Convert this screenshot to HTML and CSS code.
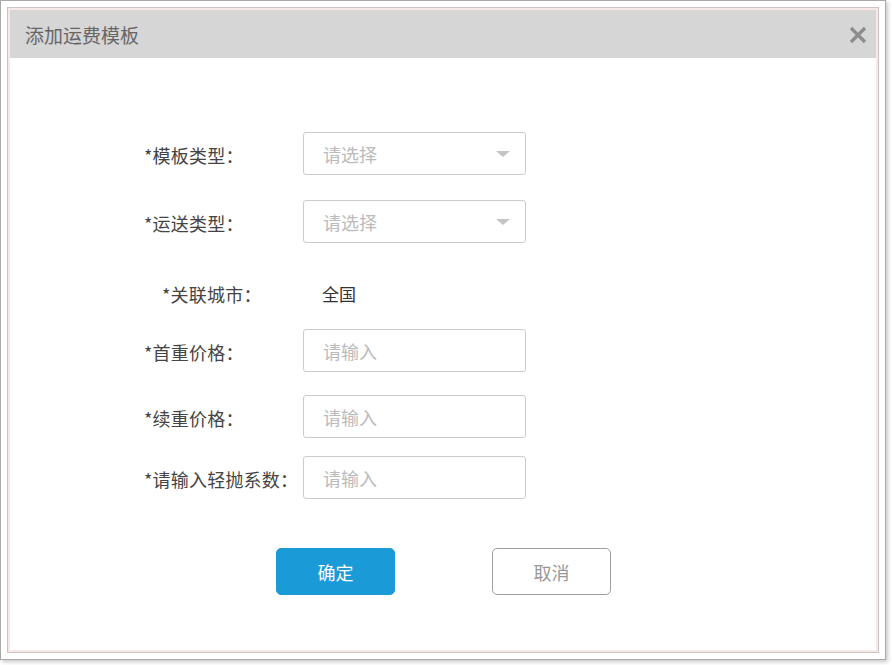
FILE: index.html
```html
<!DOCTYPE html>
<html lang="zh">
<head>
<meta charset="utf-8">
<title>添加运费模板</title>
<link rel="stylesheet" href="styles.css">
</head>
<body>
<div class="frame">
  <div class="frame-inner">
    <div class="panel">
      <div class="header">
        <span class="title">添加运费模板</span>
        <span class="close">
          <svg width="18" height="18" viewBox="0 0 18 18"><path d="M2 2 L16 16 M16 2 L2 16" stroke="#8c8c8c" stroke-width="3.2" stroke-linecap="butt"/></svg>
        </span>
      </div>
      <div class="form">
        <div class="row r1">
          <label class="label">*模板类型：</label>
          <div class="field select"><span class="ph">请选择</span><span class="arrow"></span></div>
        </div>
        <div class="row r2">
          <label class="label">*运送类型：</label>
          <div class="field select"><span class="ph">请选择</span><span class="arrow"></span></div>
        </div>
        <div class="row r3">
          <label class="label label-indent">*关联城市：</label>
          <div class="value">全国</div>
        </div>
        <div class="row r4">
          <label class="label">*首重价格：</label>
          <div class="field"><span class="ph">请输入</span></div>
        </div>
        <div class="row r5">
          <label class="label">*续重价格：</label>
          <div class="field"><span class="ph">请输入</span></div>
        </div>
        <div class="row r6">
          <label class="label">*请输入轻抛系数：</label>
          <div class="field"><span class="ph">请输入</span></div>
        </div>
        <div class="actions">
          <button class="btn btn-primary">确定</button>
          <button class="btn btn-default">取消</button>
        </div>
      </div>
    </div>
  </div>
</div>
</body>
</html>
```

FILE: styles.css
```css
* { box-sizing: border-box; }
html, body {
  margin: 0;
  padding: 0;
  background: #ffffff;
}
body {
  font-family: "Noto Sans CJK SC", "Noto Sans", sans-serif;
  width: 892px;
  height: 665px;
  overflow: hidden;
}
.frame {
  width: 886px;
  height: 660px;
  border: 1px solid #a9a9a9;
  padding: 6px;
  background: #ffffff;
  box-shadow: 2px 2px 4px rgba(0,0,0,0.22);
}
.frame-inner {
  height: 100%;
  border: 1px solid #cdc3c3;
  padding: 2px;
  background: #f8e9e9;
}
.panel {
  height: 100%;
  background: #ffffff;
}
.header {
  height: 48px;
  background: #d6d6d6;
  display: flex;
  align-items: center;
  justify-content: space-between;
  padding: 0 9px 0 15px;
}
.title {
  font-size: 19px;
  color: #666666;
  line-height: 1;
  margin-top: 1px;
}
.close {
  display: flex;
  align-items: center;
  margin-top: 2px;
}
.form {
  padding-top: 74px;
  padding-left: 134px;
}
.row {
  display: flex;
  align-items: center;
  height: 43px;
}
.r2 { margin-top: 25px; }
.r3 { margin-top: 29px; }
.r4 { margin-top: 14px; }
.r5 { margin-top: 23px; }
.r6 { margin-top: 18px; }
.label {
  width: 159px;
  font-size: 18px;
  color: #444444;
  white-space: nowrap;
  letter-spacing: 0.2px;
  padding-top: 3px;
}
.r3 .label { padding-top: 0; }
.label-indent { padding-left: 18px; }
.value {
  font-size: 17px;
  color: #333333;
  padding-left: 19px;
  padding-bottom: 1px;
}
.field {
  width: 223px;
  height: 43px;
  border: 1px solid #cccccc;
  border-radius: 3px;
  display: flex;
  align-items: center;
  justify-content: space-between;
  padding: 0 15px 0 19px;
}
.ph {
  font-size: 18px;
  color: #bbbbbb;
}
.arrow {
  width: 0;
  height: 0;
  border-left: 7px solid transparent;
  border-right: 7px solid transparent;
  border-top: 6px solid #c4c4c4;
}
.actions {
  display: flex;
  gap: 97px;
  margin-top: 49px;
  padding-left: 132px;
}
.btn {
  width: 119px;
  height: 47px;
  font-family: inherit;
  font-size: 18px;
  border-radius: 5px;
  cursor: pointer;
}
.btn-primary {
  background: #1a9bd7;
  border: 1px solid #1a9bd7;
  color: #ffffff;
}
.btn-default {
  background: #ffffff;
  border: 1px solid #9e9e9e;
  color: #999999;
}
```
